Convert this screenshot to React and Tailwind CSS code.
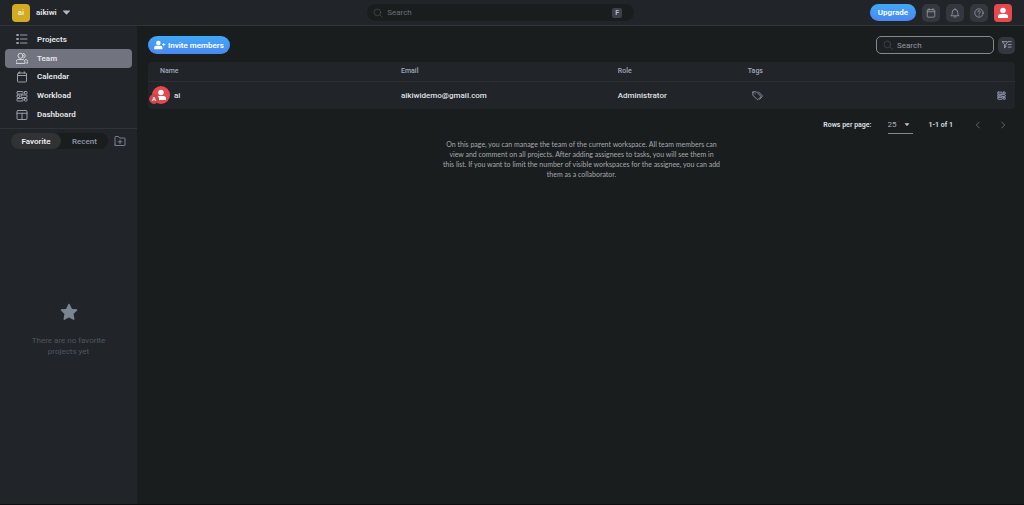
import React from "react";

function Icon({ children, className = "size-3", width = 1.6 }) {
  return (
    <svg viewBox="0 0 24 24" fill="none" stroke="currentColor" strokeWidth={width} strokeLinecap="round" strokeLinejoin="round" className={`shrink-0 ${className}`} aria-hidden="true">
      {children}
    </svg>
  );
}

const ListIcon = () => (
  <Icon width={1.9}>
    <path d="M9 4h13M9 12h13M9 20h13" />
    <path d="M2 3h3v2H2zM2 11h3v2H2zM2 19h3v2H2z" />
  </Icon>
);

const TeamIcon = () => (
  <Icon width={1.9} className="size-3">
    <circle cx="9" cy="7.5" r="5" />
    <path d="M0 22v-2c0-3 2-5 4.500-5h9c2.500 0 4.500 2 4.500 5v2zM15 2.800a4.900 4.900 0 0 1 0 9.400M19 15c3 .5 5 2 5 5v2h-3" />
  </Icon>
);

const CalendarIcon = ({ className }) => (
  <Icon className={className} width={1.9}>
    <rect x="3" y="4" width="18" height="18" rx="2" />
    <path d="M3 9h18M7.500 1.500V5M16.500 1.500V5" />
  </Icon>
);

const WorkloadIcon = ({ className, width = 1.9 }) => (
  <Icon className={className} width={width}>
    <rect x="2" y="3" width="12" height="5" rx="1" />
    <rect x="17" y="3" width="5" height="5" rx="1" />
    <rect x="2" y="10" width="5" height="5" rx="1" />
    <rect x="10" y="10" width="12" height="5" rx="1" />
    <rect x="2" y="17" width="12" height="5" rx="1" />
    <rect x="17" y="17" width="5" height="5" rx="1" />
  </Icon>
);

const DashboardIcon = () => (
  <Icon width={1.9}>
    <rect x="2" y="3" width="20" height="18" rx="2" />
    <path d="M2 8.500h20M12 8.500V21" />
  </Icon>
);

const SearchIcon = () => (
  <Icon className="size-2.5">
    <circle cx="10.500" cy="10.500" r="8" />
    <path d="m16.500 16.500 5.500 5.500" />
  </Icon>
);

const PersonIcon = ({ className }) => (
  <svg viewBox="0 0 24 24" fill="currentColor" className={`shrink-0 ${className}`} aria-hidden="true">
    <circle cx="12" cy="7" r="5.500" />
    <path d="M2 22v-3c0-3.500 2.500-5 5.500-5h9c3 0 5.500 1.500 5.500 5v3z" />
  </svg>
);

const Caret = ({ className }) => (
  <svg viewBox="0 0 8 5" fill="currentColor" className={`shrink-0 ${className}`} aria-hidden="true">
    <path d="M.5.3h7c.5 0 .6.4.3.7L4.600 4.600q-.6.5-1.200 0L.2 1C-.1.700 0 .3.500.3z" />
  </svg>
);

const navItems = [
  { label: "Projects", icon: <ListIcon /> },
  { label: "Team", icon: <TeamIcon />, active: true },
  { label: "Calendar", icon: <CalendarIcon /> },
  { label: "Workload", icon: <WorkloadIcon /> },
  { label: "Dashboard", icon: <DashboardIcon /> },
];

function Header() {
  const tool = "grid size-[18px] place-items-center rounded-[5px] bg-[#35373e] text-[#9a9eaa]";
  return (
    <header className="grid h-[26px] grid-cols-[47fr_267px_50fr] items-center border-b border-[#303338] bg-[#212529] pr-3 pl-3">
      <button type="button" className="flex items-center gap-1.5 justify-self-start font-semibold text-[#e5e6ea]">
        <span className="grid size-[18px] place-items-center rounded-[4px] bg-[#d3aa24] text-[#f5ecd0]">ai</span>
        <span>aikiwi</span>
        <Caret className="h-[5px] w-[7px] text-[#b0b4c4]" />
      </button>
      <label className="flex h-[17px] items-center gap-1 rounded-full bg-[#191d1e] px-1.5 text-[#4c4f58]">
        <SearchIcon />
        <input type="search" aria-label="Search workspace" placeholder="Search" className="min-w-0 flex-1 bg-transparent outline-none placeholder:text-[#6b6f7a]" />
        <kbd className="mr-1.5 grid h-2.5 w-2.5 place-items-center rounded-[2px] bg-[#3d4048] font-['Roboto'] text-[7px] font-semibold text-[#b9bcc6]">F</kbd>
      </label>
      <div className="flex items-center gap-1.5 justify-self-end">
        <button type="button" className="h-[17px] rounded-full bg-linear-to-b from-[#40a8f6] to-[#4b87f0] px-2 font-semibold text-white">Upgrade</button>
        <button type="button" aria-label="Calendar" className={tool}><CalendarIcon className="size-2.5" /></button>
        <button type="button" aria-label="Notifications" className={tool}>
          <Icon className="size-2.5" width={1.9}>
            <path d="M3 18c2-2 2.500-4 2.500-8a6.500 6.500 0 0 1 13 0c0 4 .5 6 2.500 8zM9.500 21.500h5M12 1.500v2" />
          </Icon>
        </button>
        <button type="button" aria-label="Help" className={tool}>
          <Icon className="size-2.5" width={1.9}>
            <circle cx="12" cy="12" r="10" />
            <path d="M9 9.500a3 3 0 1 1 4.500 2.500c-1 .6-1.500 1-1.500 2.200M12 17.300v.2" />
          </Icon>
        </button>
        <button type="button" aria-label="Profile" className="grid size-[18px] place-items-center rounded-[4px] bg-[#e5484d] text-white"><PersonIcon className="size-3" /></button>
      </div>
    </header>
  );
}

function Sidebar() {
  return (
    <aside className="flex w-[137px] shrink-0 flex-col bg-[#212529]">
      <nav className="flex h-[102px] flex-col px-[5px] py-1">
        {navItems.map((item) => (
          <a
            key={item.label}
            href={`#${item.label.toLowerCase()}`}
            aria-current={item.active ? "page" : undefined}
            className={`flex flex-1 items-center gap-[9px] rounded-[4px] pl-[11px] font-semibold text-[#e5e6ea] ${item.active ? "bg-[#71737e]" : ""}`}
          >
            <span className={item.active ? "text-[#dddee4]" : "text-[#a0a4af]"}>{item.icon}</span>
            {item.label}
          </a>
        ))}
      </nav>
      <div className="flex items-center justify-between border-t border-[#303338] py-1 pr-[11px] pl-[11px]">
        <div className="flex rounded-full bg-[#191d1e]">
          <button type="button" aria-pressed="true" className="h-4 w-[50px] rounded-full bg-[#303234] font-semibold text-[#ececef]">Favorite</button>
          <button type="button" aria-pressed="false" className="h-4 w-[47px] font-medium text-[#9297ac]">Recent</button>
        </div>
        <button type="button" aria-label="Add folder" className="text-[#7f8594]">
          <Icon width={1.9}>
            <path d="M2 20V4.500C2 3.500 2.500 3 3.500 3H9l2.500 3h9c1 0 1.500.5 1.500 1.500V20c0 .7-.3 1-1 1H3c-.7 0-1-.3-1-1zM12 10v7M8.500 13.500h7" />
          </Icon>
        </button>
      </div>
      <div className="flex flex-1 flex-col items-center justify-center gap-3.5 px-6 pt-0.5 text-center text-[#4e5663]">
        <svg viewBox="0 0 24 24" fill="#7b8592" stroke="#7b8592" strokeWidth="2" strokeLinejoin="round" className="size-[18px]" aria-hidden="true">
          <path d="m12 2 3.100 6.500 7 .9-5.100 4.900 1.300 7.200L12 18l-6.300 3.500L7 14.300 1.900 9.400l7-.9z" />
        </svg>
        <p>There are no favorite projects yet</p>
      </div>
    </aside>
  );
}

function MembersTable() {
  return (
    <div className="mt-2 overflow-hidden rounded-[4px] bg-[#212529]">
      <table className="w-full table-fixed text-left">
        <colgroup>
          <col className="w-[27.8%]" />
          <col className="w-[25%]" />
          <col className="w-[15%]" />
          <col />
          <col className="w-10" />
        </colgroup>
        <thead>
          <tr className="h-[19px] border-b border-[#2b2e33] text-[7px] text-[#a3a8ba]">
            <th className="px-3 font-medium">Name</th>
            <th className="px-3 font-medium">Email</th>
            <th className="px-3 font-medium">Role</th>
            <th className="px-3 font-medium">Tags</th>
            <th aria-label="Actions" />
          </tr>
        </thead>
        <tbody>
          <tr className="h-7 font-medium text-[#dfe0e4]">
            <td>
              <div className="flex items-center gap-1 pl-1">
                <span className="relative grid size-[18px] place-items-center rounded-full bg-[#e5484d] text-white">
                  <PersonIcon className="size-3" />
                  <span className="absolute bottom-0 -left-[3px] grid size-2.5 place-items-center rounded-full border border-[#b4474c] bg-[#cf484d] text-[6px] leading-none">A</span>
                </span>
                ai
              </div>
            </td>
            <td className="px-3">aikiwidemo@gmail.com</td>
            <td className="px-3">Administrator</td>
            <td className="px-4">
              <button type="button" aria-label="Edit tags" className="block text-[#969aa6]">
                <Icon className="size-[11px]" width={2}>
                  <path d="M2 4.500v7l9 9c.8.8 1.700.8 2.500 0l5-5c.8-.8.8-1.700 0-2.500l-9-9H3c-.6 0-1 0-1 .5zM14 4l8 8c.8.800.8 1.700 0 2.500L17 20M6.500 8.500h.1" />
                </Icon>
              </button>
            </td>
            <td>
              <button type="button" aria-label="Workload" className="ml-auto mr-[9px] block text-[#9398b4]"><WorkloadIcon className="size-[9px]" width={2.6} /></button>
            </td>
          </tr>
        </tbody>
      </table>
    </div>
  );
}

function Pagination() {
  return (
    <div className="mt-2 flex h-4 items-center justify-end pr-[7px] text-[7px] font-semibold text-[#dfe0e4]">
      <label htmlFor="rows">Rows per page:</label>
      <span className="relative ml-4 flex h-[17px] w-[25px] items-center border-b border-[#85888e]">
        <select id="rows" defaultValue="25" className="w-full appearance-none bg-transparent text-[8px] font-normal text-[#a9adba] outline-none">
          <option>25</option>
          <option>50</option>
          <option>100</option>
        </select>
        <Caret className="pointer-events-none absolute right-[3px] h-[3px] w-[6px] text-[#c3c6ce]" />
      </span>
      <span className="ml-4">1-1 of 1</span>
      <button type="button" aria-label="Previous page" className="ml-5 text-[#62666e]"><Icon className="size-2.5" width={2.4}><path d="m15 5-7 7 7 7" /></Icon></button>
      <button type="button" aria-label="Next page" className="ml-[15px] text-[#62666e]"><Icon className="size-2.5" width={2.4}><path d="m9 5 7 7-7 7" /></Icon></button>
    </div>
  );
}

export default function App() {
  return (
    <div className="flex min-h-screen flex-col border-b border-[#0d0f10] bg-[#191d1e] font-['Roboto',sans-serif] text-[8px] leading-[11px]">
      <Header />
      <div className="flex flex-1">
        <Sidebar />
        <main className="min-w-0 flex-1 pt-2.5 pr-[9px] pl-[11px]">
          <div className="flex items-center justify-between">
            <button type="button" className="flex h-[18px] items-center gap-0.5 rounded-full bg-linear-to-b from-[#40a8f6] to-[#4b87f0] px-1.5 font-semibold text-white">
              <svg viewBox="0 0 28 24" fill="currentColor" className="h-2.5 w-3" aria-hidden="true">
                <circle cx="10" cy="7" r="5.500" />
                <path d="M0 22v-3c0-3.500 2.500-5 5-5h10c2.500 0 5 1.500 5 5v3zM22 7h2v3h3v2h-3v3h-2v-3h-3v-2h3z" />
              </svg>
              Invite members
            </button>
            <div className="flex items-center gap-1">
              <label className="flex h-[18px] w-[118px] items-center gap-1 rounded-[5px] border border-[#85888e] bg-[#1d2124] px-1.5 text-[#4c4f58]">
                <SearchIcon />
                <input type="search" aria-label="Search members" placeholder="Search" className="min-w-0 flex-1 bg-transparent text-[#dfe0e4] outline-none placeholder:text-[#969aa3]" />
              </label>
              <button type="button" aria-label="Filter" className="grid size-[17px] place-items-center rounded-[5px] bg-[#35373e] text-[#a5a8b3]">
                <Icon className="size-2.5" width={2}>
                  <path d="M1 4h10M1 4l5 7v8l3-2v-6l5-7h8M15 11h7M15 17h7" />
                </Icon>
              </button>
            </div>
          </div>
          <MembersTable />
          <Pagination />
          <p className="mx-auto mt-1.5 max-w-[284px] text-center font-['Lato',sans-serif] text-[7px] leading-[10px] text-[#a6a9b1]">
            On this page, you can manage the team of the current workspace. All team members can view and comment on all projects. After adding assignees to tasks, you will see them in <br />this list. If you want to limit the number of visible workspaces for the assignee, you can add them as a collaborator.
          </p>
        </main>
      </div>
    </div>
  );
}
